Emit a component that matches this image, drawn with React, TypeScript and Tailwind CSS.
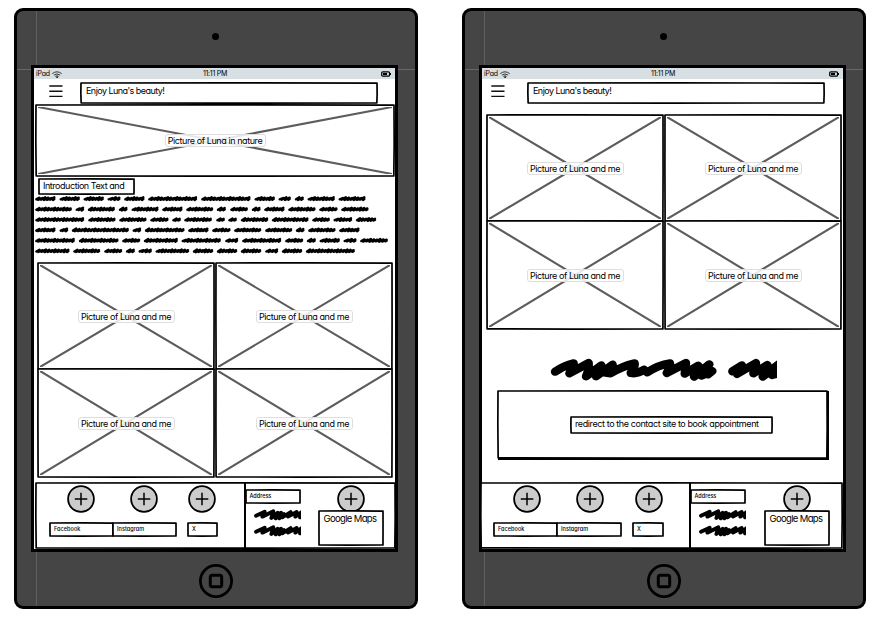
import React from "react";

const FONT =
  "font-['Inter','Noto_Sans',sans-serif] [font-feature-settings:'cv11','ss03'] text-black whitespace-nowrap leading-none";

/* Slightly uneven pen outline laid over the edges of its parent. */
function Outline({ width = 1.7 }: { width?: number }) {
  return (
    <svg
      className="absolute inset-0 h-full w-full overflow-visible pointer-events-none"
      viewBox="0 0 100 100"
      preserveAspectRatio="none"
    >
      <path
        d="M0 0 L50 -0.2 L100 0.2 L100.05 55 L99.95 100 L48 100.2 L0.05 99.8 L-0.05 50 Z"
        fill="none"
        stroke="#000"
        strokeWidth={width}
        strokeLinejoin="round"
        vectorEffect="non-scaling-stroke"
      />
    </svg>
  );
}

function Box({ className, children }: { className: string; children?: React.ReactNode }) {
  return (
    <div className={`relative bg-white shrink-0 ${className}`}>
      <Outline />
      {children}
    </div>
  );
}

function Picture({ className, label, labelClass }: { className: string; label: string; labelClass: string }) {
  return (
    <div className={`relative flex items-center justify-center bg-white ${className}`}>
      <svg
        className="absolute inset-[2px] h-[calc(100%-4px)] w-[calc(100%-4px)]"
        viewBox="0 0 100 100"
        preserveAspectRatio="none"
      >
        <path d="M0 0 L100 100 M0 100 L100 0" stroke="#5c5c5c" strokeWidth="2.1" vectorEffect="non-scaling-stroke" />
      </svg>
      <Outline />
      <div
        className={`relative flex h-[13px] items-center justify-center rounded-[3px] border border-[#dedede] bg-white/85 text-[9px] ${FONT} ${labelClass}`}
      >
        {label}
      </div>
    </div>
  );
}

function PictureGrid({ className }: { className: string }) {
  return (
    <div className={`grid grid-cols-2 grid-rows-[106px_108px] gap-x-[2px] ${className}`}>
      {[0, 1, 2, 3].map((i) => (
        <Picture key={i} className="" label="Picture of Luna and me" labelClass="w-[97px] tracking-[-0.43px]" />
      ))}
    </div>
  );
}

/* Word extents of the scribbled paragraph, in thirds of a pixel. */
const LINES: number[][] = [
  [45, 107, 118, 180, 190, 252, 262, 302, 312, 374, 384, 532, 543, 692, 703, 765, 775, 813, 824, 852, 862, 945, 955, 1037],
  [45, 156, 166, 193, 203, 285, 296, 323, 334, 416, 426, 488, 498, 580, 590, 618, 630, 684, 695, 722, 732, 794, 804, 887, 897, 953, 963, 1046],
  [45, 193, 204, 287, 297, 380, 390, 446, 456, 483, 492, 576, 588, 615, 624, 651, 662, 745, 755, 866, 876, 930, 940, 997, 1007, 1069],
  [45, 107, 118, 145, 155, 327, 337, 364, 374, 494, 504, 566, 576, 632, 642, 724, 735, 817, 827, 854, 864, 947, 957, 1019],
  [45, 165, 176, 296, 306, 361, 371, 474, 484, 603, 615, 655, 666, 784, 795, 850, 860, 888, 898, 960, 970, 1010, 1020, 1104],
  [45, 149, 159, 241, 252, 307, 317, 345, 355, 396, 406, 508, 518, 580, 590, 652, 662, 724, 735, 775, 785, 847, 857, 1005],
];

function wordPath(x0: number, x1: number, y: number) {
  const start = x0 + 4;
  const end = x1 - 4;
  const n = Math.max(2, Math.round((end - start) / 9.5));
  let d = `M${start} ${y + 2}`;
  for (let i = 1; i <= n; i++) {
    const x = start + ((end - start) * i) / n;
    const wobble = (i * 7 + Math.round(x0)) % 3;
    d += ` L${x} ${y - 4 + wobble} L${x - 4} ${y + 4 - wobble * 0.5}`;
  }
  return d + ` L${end} ${y + 1}`;
}

function Paragraph() {
  return (
    <svg className="h-[66px] w-[357px] shrink-0" viewBox="42 57 1071 198">
      {LINES.map((line, r) =>
        line.map((x, i) =>
          i % 2 === 0 ? (
            <path
              key={`${r}-${i}`}
              d={wordPath(x, line[i + 1], 71 + r * 31.3)}
              fill="none"
              stroke="#000"
              strokeWidth="7.2"
              strokeLinecap="round"
              strokeLinejoin="round"
            />
          ) : null
        )
      )}
    </svg>
  );
}

function AddressScribble({ className }: { className: string }) {
  return (
    <svg className={`h-[12px] w-[47px] ${className}`} viewBox="162 119 141 36">
      <path
        d="M168 139 L194 127 L187 142 L220 126 L214 146 L233 130 L227 147 L243 130 L238 147 L252 134 L247 144 L272 128 L264 142 L290 128 L286 142 L306 127 L300 144"
        fill="none"
        stroke="#000"
        strokeWidth="11.5"
        strokeLinecap="round"
        strokeLinejoin="round"
      />
    </svg>
  );
}

function BigScribble() {
  return (
    <svg className="ml-[68px] h-[24px] w-[227px]" viewBox="210 55 681 72">
      <g fill="none" stroke="#000" strokeWidth="25" strokeLinecap="round" strokeLinejoin="round">
        <path d="M225 96 Q252 78 281 71 Q282 84 268 101 L326 70 Q328 90 318 110 L364 77 L348 110 L398 75 Q396 90 372 98 L392 101 Q425 80 464 71 Q466 84 452 100 Q472 104 492 90" />
        <path d="M502 98 Q535 76 570 71 Q572 84 560 100 L618 70 L614 102 L655 78 L642 111 L688 74 L664 108 L697 94 L684 104" />
        <path d="M492 96 L512 90" strokeWidth="18" />
        <path d="M757 95 L786 77 L771 103 L828 70 L820 101 L862 76 L848 111 L896 74 L876 106 L900 100" />
      </g>
    </svg>
  );
}

function PlusCircle({ className }: { className: string }) {
  return (
    <svg className={`h-[28px] w-[28px] shrink-0 ${className}`} viewBox="0 0 28 28">
      <circle cx="14" cy="14" r="12.9" fill="#ccc" stroke="#000" strokeWidth="1.8" />
      <path d="M14 7.8V20.3M7.8 14H20.3" stroke="#000" strokeWidth="1.5" />
    </svg>
  );
}

function TinyBox({ className, text, textClass }: { className: string; text: string; textClass: string }) {
  return (
    <Box className={`flex h-[13px] items-center pl-[4px] ${className}`}>
      <span className={`text-[5.5px] ${FONT} ${textClass}`}>{text}</span>
    </Box>
  );
}

type FooterProps = {
  className: string;
  left: string;
  maps: string;
  circles: [string, string, string];
  boxes: [string, string, string];
};

function Footer({ className, left, maps, circles, boxes }: FooterProps) {
  return (
    <div className={`relative flex h-[65px] bg-white ${className}`}>
      <Outline />
      <div className={`shrink-0 ${left}`}>
        <div className="mt-[2px] flex">
          {circles.map((c) => (
            <PlusCircle key={c} className={c} />
          ))}
        </div>
        <div className="mt-[10px] flex">
          <TinyBox className={boxes[0]} text="Facebook" textClass="font-medium tracking-[0.06px]" />
          <TinyBox className={boxes[1]} text="Instagram" textClass="font-medium tracking-[0.06px]" />
          <TinyBox className={boxes[2]} text="X" textClass="font-medium" />
        </div>
      </div>
      <div className="w-[1.5px] shrink-0 bg-black" />
      <div className="w-[55px] shrink-0">
        <TinyBox className="mt-[7px] w-[54px]" text="Address" textClass="font-medium" />
        <AddressScribble className="ml-[8px] mt-[6px]" />
        <AddressScribble className="ml-[8px] mt-[4px]" />
      </div>
      <div className={`shrink-0 ${maps}`}>
        <PlusCircle className="ml-[18px] mt-[2px]" />
        <Box className="-mt-[2px] h-[34px] w-[64px] pl-[5px] pt-[3px]">
          <div className={`text-[9.5px] tracking-[-0.65px] ${FONT}`}>Google Maps</div>
        </Box>
      </div>
    </div>
  );
}

function StatusBar() {
  return (
    <div className={`flex h-[11px] shrink-0 items-center justify-between bg-[#d7dfe2] pl-[2px] pr-[4px] text-[7px] ${FONT}`}>
      <div className="flex w-[60px] items-center gap-[2px]">
        <span className="-mt-px tracking-[-0.2px]">iPad</span>
        <svg className="mt-[2px] h-[7px] w-[10px]" viewBox="0 0 10 7" fill="none" stroke="#222" strokeWidth="0.9" strokeLinecap="round">
          <path d="M0.6 2.4 Q5 -1 9.4 2.4M2.2 3.9 Q5 1.7 7.8 3.9M3.7 5.2 Q5 4.2 6.3 5.2" />
          <circle cx="5" cy="6.2" r="0.4" fill="#222" />
        </svg>
      </div>
      <span className="-mt-px ml-[3px] tracking-[-0.25px]">11:11 PM</span>
      <div className="flex w-[60px] justify-end">
        <svg className="h-[6px] w-[10px]" viewBox="0 0 10 6">
          <rect x="0.7" y="0.8" width="7.8" height="4.4" rx="1" fill="none" stroke="#000" strokeWidth="1.2" />
          <rect x="2" y="2" width="4" height="2" fill="#000" />
          <rect x="9" y="2" width="1" height="2" fill="#000" />
        </svg>
      </div>
    </div>
  );
}

function Header({ menu, title }: { menu: string; title: string }) {
  return (
    <div className="flex h-[25px] shrink-0 items-start">
      <svg className={`mt-[6px] h-[13px] w-[14px] shrink-0 ${menu}`} viewBox="0 0 14 13">
        <path d="M0.3 1H13.5M0.3 6.3H13.5M0.3 11.4H13.5" stroke="#111" strokeWidth="1.4" />
      </svg>
      <Box className={`mt-[4px] h-[20px] w-[296px] pl-[5px] pt-[3px] ${title}`}>
        <div className={`text-[9px] tracking-[-0.55px] ${FONT}`}>Enjoy Luna's beauty!</div>
      </Box>
    </div>
  );
}

function Tablet({ children }: { children: React.ReactNode }) {
  return (
    <div className="relative h-[601px] w-[404px] shrink-0 rounded-[9px] border-[3px] border-black bg-[#454545]">
      <div className="absolute left-[19px] top-0 h-full w-px bg-[#606060]" />
      <div className="absolute left-0 top-[58px] h-px w-full bg-[#686868]" />
      <div className="relative flex flex-col items-start">
        <div className="ml-[195px] mt-[22px] h-[7px] w-[7px] rounded-full bg-black" />
        <div className="ml-[14px] mt-[25px] flex h-[487px] w-[367px] flex-col border-[3px] border-black bg-white">
          {children}
        </div>
        <svg className="ml-[181px] mt-[11px] h-[36px] w-[36px]" viewBox="0 0 36 36" fill="none" stroke="#000">
          <circle cx="18" cy="18" r="15.6" strokeWidth="2.8" />
          <rect x="12.3" y="12.3" width="11.4" height="11.4" rx="2" strokeWidth="3" />
        </svg>
      </div>
    </div>
  );
}

export default function App() {
  return (
    <div className="flex h-[618px] w-[878px] gap-[44px] overflow-hidden bg-white pl-[14px] pt-[8px]">
      <Tablet>
        <StatusBar />
        <Header menu="ml-[15px]" title="ml-[18px]" />
        <Picture
          className="ml-[2px] mt-[1px] h-[71px] w-[358px] shrink-0"
          label="Picture of Luna in nature"
          labelClass="-mt-px w-[101px] tracking-[-0.42px]"
        />
        <Box className="ml-[5px] mt-[3px] h-[15px] w-[95px] pl-[4px] pt-[2px]">
          <div className={`text-[9px] tracking-[-0.45px] ${FONT}`}>Introduction Text and</div>
        </Box>
        <Paragraph />
        <PictureGrid className="ml-[4px] mt-[3px] w-[354px] shrink-0" />
        <Footer
          className="ml-[2px] mt-[6px] w-[359px]"
          left="w-[208px]"
          maps="ml-[18px]"
          circles={["ml-[31px]", "ml-[35px]", "ml-[30px]"]}
          boxes={["ml-[14px] w-[63px]", "w-[63px]", "ml-[12px] w-[29px]"]}
        />
      </Tablet>
      <Tablet>
        <StatusBar />
        <Header menu="ml-[9px]" title="ml-[23px]" />
        <PictureGrid className="ml-[5px] mt-[11px] w-[354px] shrink-0" />
        <div className="mt-[29px] h-[24px] shrink-0">
          <BigScribble />
        </div>
        <div className="relative ml-[16px] mt-[9px] flex h-[67px] w-[329px] shrink-0 items-center bg-white shadow-[1px_1px_0_1px_#000]">
          <Outline />
          <Box className="ml-[73px] h-[16px] w-[201px] pl-[4px] pt-[2px]">
            <div className={`text-[9px] tracking-[-0.4px] ${FONT}`}>redirect to the contact site to book appointment</div>
          </Box>
        </div>
        <Footer
          className="-ml-px mt-[25px] w-[361px]"
          left="w-[208px]"
          maps="ml-[19px]"
          circles={["ml-[32px]", "ml-[35px]", "ml-[31px]"]}
          boxes={["ml-[13px] w-[63px]", "w-[64px]", "ml-[12px] w-[30px]"]}
        />
      </Tablet>
    </div>
  );
}
